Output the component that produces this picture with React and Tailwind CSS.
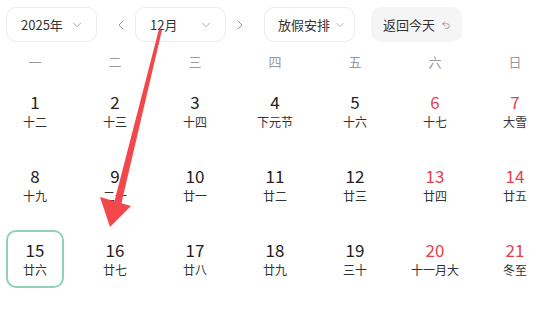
import { ChevronDown, ChevronLeft, ChevronRight, Undo2 } from "lucide-react";

const WEEK = ["一", "二", "三", "四", "五", "六", "日"];

const ROWS = [
  [["1", "十二"], ["2", "十三"], ["3", "十四"], ["4", "下元节"], ["5", "十六"], ["6", "十七"], ["7", "大雪"]],
  [["8", "十九"], ["9", "二十"], ["10", "廿一"], ["11", "廿二"], ["12", "廿三"], ["13", "廿四"], ["14", "廿五"]],
  [["15", "廿六"], ["16", "廿七"], ["17", "廿八"], ["18", "廿九"], ["19", "三十"], ["20", "十一月大"], ["21", "冬至"]],
];

const Dropdown = ({ label, width }) => (
  <div
    className={`flex h-[35px] items-center justify-between rounded-[10px] border border-[#ececec] bg-white pl-[14px] pr-[12px] text-[13px] text-[#333] ${width}`}
  >
    <span>{label}</span>
    <ChevronDown size={14} strokeWidth={1.5} className="text-[#999]" />
  </div>
);

const Arrow = () => (
  <svg className="pointer-events-none absolute left-0 top-0" width="554" height="311" viewBox="0 0 554 311">
    <polygon points="159,29 162,30 121,205 114,203" fill="#f2474b" />
    <polygon points="110,227 100,197 131,206" fill="#f2474b" />
  </svg>
);

export default function App() {
  return (
    <div
      className="relative h-[311px] w-[554px] overflow-hidden bg-white"
      style={{ fontFamily: '"Noto Sans CJK SC", "Liberation Sans", sans-serif' }}
    >
      <div className="flex items-center pl-[6px] pt-[7px]">
        <Dropdown label="2025年" width="w-[91px]" />
        <ChevronLeft size={16} strokeWidth={1.5} className="ml-[16px] text-[#999]" />
        <div className="ml-[6px]">
          <Dropdown label="12月" width="w-[91px]" />
        </div>
        <ChevronRight size={16} strokeWidth={1.5} className="ml-[6px] text-[#999]" />
        <div className="ml-[16px] flex h-[35px] w-[91px] items-center justify-between rounded-[10px] border border-[#ececec] bg-white pl-[13px] pr-[8px] text-[13px] text-[#333]">
          <span>放假安排</span>
          <ChevronDown size={12} strokeWidth={1.5} className="text-[#999]" />
        </div>
        <div className="ml-[16px] flex h-[35px] w-[91px] items-center gap-[6px] rounded-[10px] bg-[#f5f5f5] pl-[12px] text-[13px] text-[#333]">
          <span>返回今天</span>
          <Undo2 size={10} strokeWidth={1.8} className="text-[#888]" />
        </div>
      </div>

      <div className="grid grid-cols-[repeat(7,58px)] gap-x-[22px] pl-[6px] pt-[5px]">
        {WEEK.map((w) => (
          <div key={w} className="flex h-[30px] items-center justify-center text-[13px] text-[#999]">
            {w}
          </div>
        ))}
      </div>

      <div className="mt-[5px] grid grid-cols-[repeat(7,58px)] gap-x-[22px] gap-y-[16px] pl-[6px]">
        {ROWS.flat().map(([d, l], i) => {
          const weekend = i % 7 >= 5;
          const today = d === "15";
          return (
            <div
              key={d}
              className={`flex h-[58px] flex-col items-center justify-center rounded-[10px] ${
                today ? "border-2 border-[#8fd3b4]" : ""
              }`}
            >
              <span className={`text-[17px] leading-[20px] ${weekend ? "text-[#e8414b]" : "text-[#222]"}`}>{d}</span>
              <span className="mt-[1px] text-[12px] leading-[17px] text-[#333]">{l}</span>
            </div>
          );
        })}
      </div>

      <Arrow />
    </div>
  );
}
